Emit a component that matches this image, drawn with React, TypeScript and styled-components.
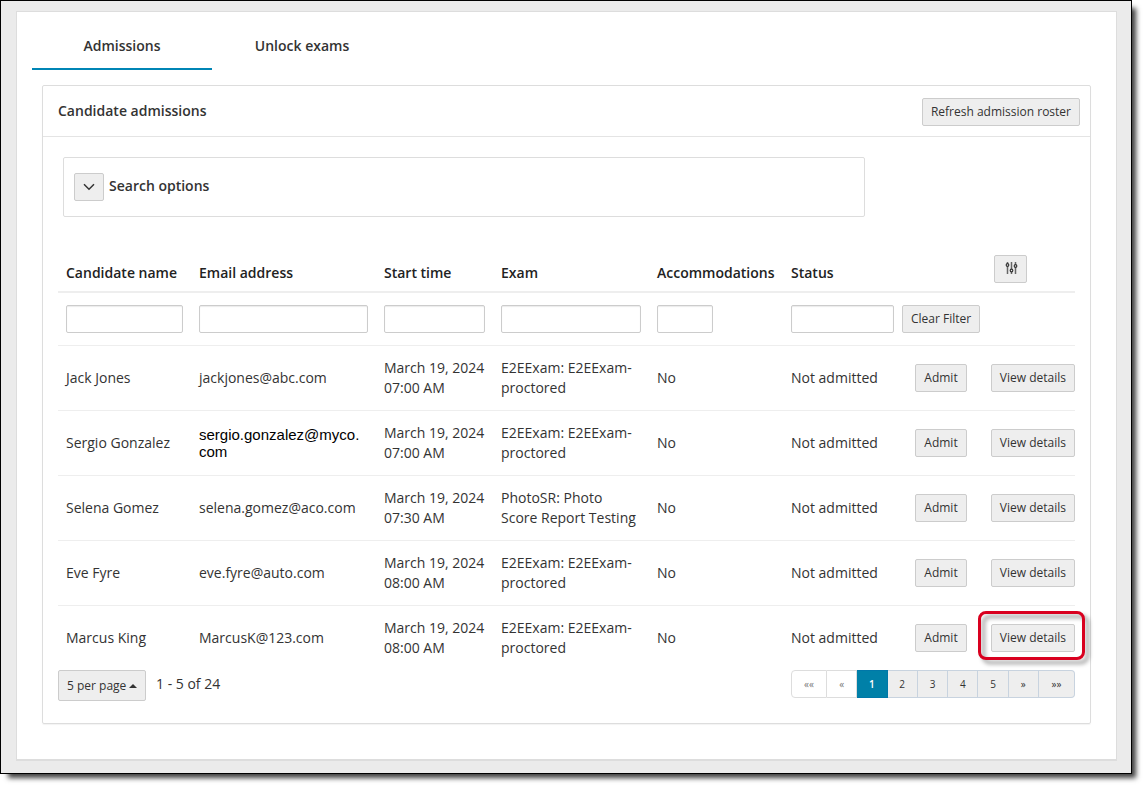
import React from "react";
import styled, { createGlobalStyle, css } from "styled-components";

const GlobalStyle = createGlobalStyle`
  *, *::before, *::after { box-sizing: border-box; }
  body {
    margin: 0;
    background: #fff;
    color: #333;
    font: 14px/20px "Open Sans", "Noto Sans", sans-serif;
  }
`;

const Frame = styled.div`
  margin: 0 15px 15px 0;
  padding: 10px 14px 12px 15px;
  border: 1px solid #000;
  background: #ebebeb;
  box-shadow: 6px 6px 5px -2px rgba(0, 0, 0, 0.75);
`;

const Panel = styled.main`
  padding: 11px 25px 35px;
  border: 1px solid #ddd;
  border-bottom-width: 2px;
  background: #fff;
`;

const Tabs = styled.nav`
  display: flex;
  margin: 0 -10px 15px;
`;

const Tab = styled.a<{ $active?: boolean }>`
  width: 180px;
  padding: 13px 0 12px;
  border-bottom: 2px solid ${(p) => (p.$active ? "#0085b5" : "transparent")};
  color: #333;
  font-weight: 600;
  text-align: center;
  text-decoration: none;
`;

const Card = styled.section`
  border: 1px solid #ddd;
  border-radius: 2px;
  box-shadow: 0 1px 1px rgba(0, 0, 0, 0.05);
`;

const CardHeader = styled.header`
  display: flex;
  align-items: center;
  justify-content: space-between;
  padding: 12px 10px 10px 15px;
  border-bottom: 1px solid #e4e4e4;
`;

const Title = styled.h2`
  margin: 0;
  padding-bottom: 2px;
  font-size: 14px;
  font-weight: 600;
  line-height: 20px;
`;

const CardBody = styled.div`
  padding: 20px 15px 22px;
`;

const control = css`
  border: 1px solid #ccc;
  border-radius: 2px;
  background: #eee;
  color: #333;
  font: 12px/18px "Open Sans", "Noto Sans", sans-serif;
`;

const Button = styled.button`
  ${control}
  display: inline-flex;
  align-items: center;
  justify-content: center;
  height: 28px;
  padding: 0 8px;
  white-space: nowrap;
  vertical-align: top;
`;

const SearchBox = styled.div`
  display: flex;
  align-items: center;
  gap: 5px;
  width: 802px;
  max-width: 100%;
  margin: 0 5px 30px;
  padding: 15px 10px;
  border: 1px solid #ddd;
  border-radius: 2px;
`;

const Table = styled.table`
  width: 100%;
  border-collapse: separate;
  border-spacing: 0;
  table-layout: fixed;
`;

const Col = styled.col<{ $width: number }>`
  width: ${(p) => p.$width}px;
`;

const HeadCell = styled.th`
  padding: 8px 0 8px 8px;
  border-bottom: 2px solid #eee;
  color: #222;
  font-weight: 600;
  text-align: left;
  vertical-align: bottom;
  white-space: nowrap;
`;

const ToolCell = styled(HeadCell)`
  padding-left: 14px;
`;

const FilterCell = styled.td`
  padding: 12px 8px;
`;

const ClearCell = styled(FilterCell)`
  padding: 12px 0;
`;

const FilterInput = styled.input<{ $narrow?: boolean }>`
  ${control}
  display: block;
  width: ${(p) => (p.$narrow ? "56px" : "100%")};
  height: 28px;
  padding: 0 8px;
  background: #fff;
  box-shadow: inset 0 1px 1px rgba(0, 0, 0, 0.08);
`;

const Cell = styled.td`
  padding: 12px 8px;
  border-top: 1px solid #eee;
`;

const AdmitCell = styled(Cell)`
  padding: 12px 0;
  text-align: center;
`;

const DetailsCell = styled(Cell)`
  padding: 12px 0;
  text-align: right;
`;

const PlainEmail = styled.span`
  display: block;
  color: #000;
  font: 15px/17px "Liberation Sans", Arial, sans-serif;
`;

const Marked = styled.span`
  position: relative;
  display: inline-block;
  vertical-align: top;

  &::after {
    content: "";
    position: absolute;
    inset: -13px -10px -8px -13px;
    border: 3px solid #d9001f;
    border-radius: 8px;
    filter: drop-shadow(4px 4px 2px rgba(0, 0, 0, 0.4));
    pointer-events: none;
  }
`;

const Footer = styled.footer`
  display: flex;
  align-items: flex-start;
  justify-content: space-between;
`;

const PageSize = styled.div`
  display: flex;
  gap: 10px;
  line-height: 28px;
`;

const SelectBox = styled.div`
  position: relative;

  svg {
    position: absolute;
    top: 14px;
    right: 9px;
    pointer-events: none;
  }
`;

const Select = styled.select`
  ${control}
  appearance: none;
  display: block;
  width: 88px;
  height: 31px;
  padding: 0 8px;
`;

const Pager = styled.nav`
  display: flex;
  width: 284px;
  height: 28px;
`;

const PageButton = styled.button<{ $edge?: boolean; $current?: boolean }>`
  flex: ${(p) => (p.$edge ? "0 0 36px" : "1 1 0")};
  min-width: 0;
  padding: 0;
  border: 1px solid #c8d3df;
  border-left-width: 0;
  background: #eee;
  color: #333;
  font: 10px/14px "Open Sans", "Noto Sans", sans-serif;

  &:first-child {
    border-left-width: 1px;
    border-radius: 4px 0 0 4px;
  }
  &:last-child {
    border-radius: 0 4px 4px 0;
  }
  &:disabled {
    border-color: #ddd;
    background: #fff;
    color: #777;
  }
  ${(p) =>
    p.$current &&
    css`
      border-color: #0077a8;
      background: #0080a8;
      color: #fff;
      font-weight: 600;
    `}
`;

type Candidate = { name: string; email: string; time: string; exam: string; plain?: boolean; marked?: boolean };

const candidates: Candidate[] = [
  { name: "Jack Jones", email: "jackjones@abc.com", time: "07:00 AM", exam: "E2EExam: E2EExam-proctored" },
  { name: "Sergio Gonzalez", email: "sergio.gonzalez@myco.com", time: "07:00 AM", exam: "E2EExam: E2EExam-proctored", plain: true },
  { name: "Selena Gomez", email: "selena.gomez@aco.com", time: "07:30 AM", exam: "PhotoSR: Photo Score Report Testing" },
  { name: "Eve Fyre", email: "eve.fyre@auto.com", time: "08:00 AM", exam: "E2EExam: E2EExam-proctored" },
  { name: "Marcus King", email: "MarcusK@123.com", time: "08:00 AM", exam: "E2EExam: E2EExam-proctored", marked: true },
];

const columns = ["Candidate name", "Email address", "Start time", "Exam", "Accommodations", "Status"];
const widths = [133, 185, 117, 156, 134, 119, 78, 95];

const SlidersIcon = () => (
  <svg width="15" height="16" viewBox="-2 0 15 16" fill="none" stroke="#666" strokeWidth="1.5" aria-hidden="true">
    <path d="M2.500 1v1.500M2.500 5.500v7.500M6.500 1v7M6.500 11v2M10.500 1v2.500M10.500 6.500v6.500" />
    <g stroke="#333" strokeWidth="1.200">
      <circle cx="2.500" cy="4" r="1.300" />
      <circle cx="6.500" cy="9.500" r="1.300" />
      <circle cx="10.500" cy="5" r="1.300" />
    </g>
  </svg>
);

const renderEmail = (c: Candidate) => {
  if (!c.plain) return c.email;
  const cut = c.email.lastIndexOf(".") + 1;
  return (
    <PlainEmail>
      {c.email.slice(0, cut)}
      <wbr />
      {c.email.slice(cut)}
    </PlainEmail>
  );
};

export default function App() {
  return (
    <>
      <GlobalStyle />
      <Frame>
        <Panel>
          <Tabs>
            <Tab href="#admissions" $active aria-current="page">Admissions</Tab>
            <Tab href="#unlock">Unlock exams</Tab>
          </Tabs>
          <Card>
            <CardHeader>
              <Title>Candidate admissions</Title>
              <Button>Refresh admission roster</Button>
            </CardHeader>
            <CardBody>
              <SearchBox>
                <Button aria-label="Toggle search options" aria-expanded={false}>
                  <svg width="12" height="8" viewBox="0 0 12 8" fill="none" stroke="#333" strokeWidth="1.500" aria-hidden="true">
                    <path d="M1 1.200l5 5 5-5" />
                  </svg>
                </Button>
                <Title>Search options</Title>
              </SearchBox>
              <Table>
                <colgroup>
                  {widths.map((w, i) => (
                    <Col key={i} $width={w} />
                  ))}
                </colgroup>
                <thead>
                  <tr>
                    {columns.map((c) => (
                      <HeadCell key={c} scope="col">{c}</HeadCell>
                    ))}
                    <HeadCell as="td" />
                    <ToolCell as="td">
                      <Button aria-label="Choose columns">
                        <SlidersIcon />
                      </Button>
                    </ToolCell>
                  </tr>
                  <tr>
                    {columns.map((c) => (
                      <FilterCell key={c}>
                        <FilterInput type="text" aria-label={`Filter by ${c}`} $narrow={c === "Accommodations"} />
                      </FilterCell>
                    ))}
                    <ClearCell>
                      <Button>Clear Filter</Button>
                    </ClearCell>
                    <td />
                  </tr>
                </thead>
                <tbody>
                  {candidates.map((c) => (
                    <tr key={c.name}>
                      <Cell>{c.name}</Cell>
                      <Cell>{renderEmail(c)}</Cell>
                      <Cell>
                        March 19, 2024
                        <br />
                        {c.time}
                      </Cell>
                      <Cell>{c.exam}</Cell>
                      <Cell>No</Cell>
                      <Cell>Not admitted</Cell>
                      <AdmitCell>
                        <Button>Admit</Button>
                      </AdmitCell>
                      <DetailsCell>
                        {c.marked ? (
                          <Marked>
                            <Button>View details</Button>
                          </Marked>
                        ) : (
                          <Button>View details</Button>
                        )}
                      </DetailsCell>
                    </tr>
                  ))}
                </tbody>
              </Table>
              <Footer>
                <PageSize>
                  <SelectBox>
                    <Select aria-label="Rows per page" defaultValue="5">
                      <option value="5">5 per page</option>
                      <option value="10">10 per page</option>
                      <option value="20">20 per page</option>
                    </Select>
                    <svg width="8" height="4" viewBox="0 0 8 4" fill="#333" aria-hidden="true">
                      <path d="M0 4l4-4 4 4z" />
                    </svg>
                  </SelectBox>
                  <span>1 - 5 of 24</span>
                </PageSize>
                <Pager aria-label="Pages">
                  <PageButton $edge disabled aria-label="First page">««</PageButton>
                  <PageButton disabled aria-label="Previous page">«</PageButton>
                  {[1, 2, 3, 4, 5].map((n) => (
                    <PageButton key={n} $current={n === 1} aria-current={n === 1 ? "page" : undefined}>{n}</PageButton>
                  ))}
                  <PageButton aria-label="Next page">»</PageButton>
                  <PageButton $edge aria-label="Last page">»»</PageButton>
                </Pager>
              </Footer>
            </CardBody>
          </Card>
        </Panel>
      </Frame>
    </>
  );
}
